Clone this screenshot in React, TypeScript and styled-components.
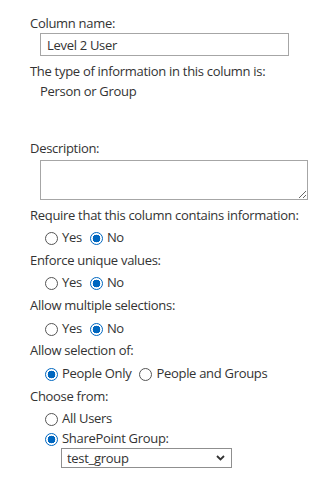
import React from "react";
import styled, { createGlobalStyle } from "styled-components";

const Global = createGlobalStyle`
  html, body { margin: 0; padding: 0; background: #fff; }
  body { font-family: "Open Sans", "Noto Sans", sans-serif; font-size: 13px; letter-spacing: -0.3px; color: #333; }
`;

const Form = styled.div`
  display: flex;
  flex-direction: column;
  padding: 13px 0 0 30px;
`;

const Label = styled.div<{ $mt?: number }>`
  line-height: 20px;
  margin-top: ${(p) => p.$mt ?? 0}px;
  white-space: nowrap;
`;

const Indented = styled.div<{ $mt?: number }>`
  margin-left: 10px;
  margin-top: ${(p) => p.$mt ?? 0}px;
  line-height: 20px;
  white-space: nowrap;
`;

const TextInput = styled.input`
  box-sizing: border-box;
  width: 249px;
  height: 23px;
  margin: 0 0 0 10px;
  padding: 0 6px;
  border: 1px solid #a6a6a6;
  font: inherit;
  letter-spacing: inherit;
  color: #333;
  outline: none;
`;

const TextArea = styled.textarea`
  box-sizing: border-box;
  width: 268px;
  height: 40px;
  margin: 2px 0 0 10px;
  border: 1px solid #a6a6a6;
  font: inherit;
  display: block;
  outline: none;
`;

const RadioRow = styled.div<{ $mt?: number }>`
  margin-left: 10px;
  margin-top: ${(p) => p.$mt ?? 2}px;
  line-height: 20px;
  white-space: nowrap;
`;

const Option = styled.label<{ $first?: boolean }>`
  margin-left: ${(p) => (p.$first ? 0 : 3)}px;
`;

const Radio = styled.input.attrs({ type: "radio" })`
  appearance: none;
  -webkit-appearance: none;
  box-sizing: border-box;
  width: 13px;
  height: 13px;
  margin: 0 4px 0 5px;
  border: 1px solid #555;
  border-radius: 50%;
  background: #fff;
  vertical-align: -3px;
  &:checked {
    border-color: #0067c0;
    background: radial-gradient(circle, #0067c0 0 3.6px, #fff 4.1px);
  }
`;

const SelectWrap = styled.div`
  position: relative;
  margin-left: 31px;
  width: 171px;
`;

const Select = styled.select`
  appearance: none;
  -webkit-appearance: none;
  box-sizing: border-box;
  width: 171px;
  height: 20px;
  padding: 0 0 0 5px;
  border: 1px solid #8f8f8f;
  border-radius: 0;
  background: #fff;
  font: inherit;
  letter-spacing: inherit;
  color: #333;
  line-height: 18px;
  display: block;
  outline: none;
`;

const Chevron = styled.svg`
  position: absolute;
  right: 7px;
  top: 7px;
  pointer-events: none;
`;

export default function App() {
  return (
    <>
      <Global />
      <Form>
        <Label>Column name:</Label>
        <TextInput defaultValue="Level 2 User" />
        <Label $mt={5}>The type of information in this column is:</Label>
        <Indented>Person or Group</Indented>
        <Label $mt={37}>Description:</Label>
        <TextArea />
        <Label $mt={5}>Require that this column contains information:</Label>
        <RadioRow>
          <Option $first><Radio name="req" />Yes</Option>
          <Option><Radio name="req" defaultChecked />No</Option>
        </RadioRow>
        <Label $mt={3}>Enforce unique values:</Label>
        <RadioRow>
          <Option $first><Radio name="uniq" />Yes</Option>
          <Option><Radio name="uniq" defaultChecked />No</Option>
        </RadioRow>
        <Label $mt={3}>Allow multiple selections:</Label>
        <RadioRow $mt={3}>
          <Option $first><Radio name="multi" />Yes</Option>
          <Option><Radio name="multi" defaultChecked />No</Option>
        </RadioRow>
        <Label $mt={2}>Allow selection of:</Label>
        <RadioRow $mt={3}>
          <Option $first><Radio name="sel" defaultChecked />People Only</Option>
          <Option><Radio name="sel" />People and Groups</Option>
        </RadioRow>
        <Label $mt={3}>Choose from:</Label>
        <RadioRow>
          <Option $first><Radio name="from" />All Users</Option>
        </RadioRow>
        <RadioRow $mt={0}>
          <Option $first><Radio name="from" defaultChecked />SharePoint Group:</Option>
        </RadioRow>
        <SelectWrap>
          <Select defaultValue="test_group">
            <option value="test_group">test_group</option>
          </Select>
          <Chevron width="9" height="6" viewBox="0 0 9 6">
            <path d="M1 1l3.5 3.5L8 1" fill="none" stroke="#333" strokeWidth="1.8" />
          </Chevron>
        </SelectWrap>
      </Form>
    </>
  );
}
